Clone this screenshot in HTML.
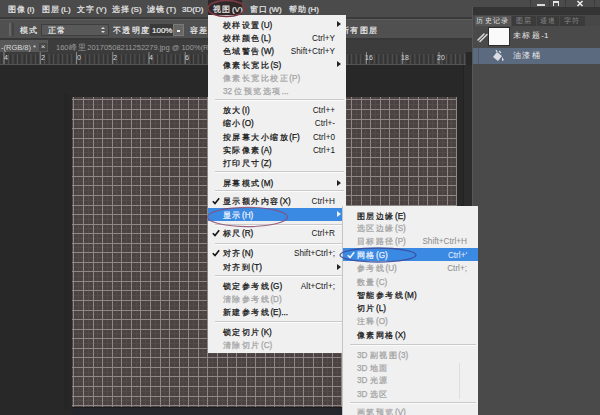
<!DOCTYPE html>
<html><head><meta charset="utf-8">
<style>
*{margin:0;padding:0;box-sizing:border-box}
html,body{width:600px;height:415px;overflow:hidden;background:#282828;font-family:"Liberation Sans",sans-serif;}
.a{position:absolute}
#menubar{left:0;top:0;width:600px;height:17px;background:#4b4b4b}
.mb{position:absolute;top:4px;font-size:8px;line-height:11px;color:#e8e8e8;white-space:nowrap;-webkit-text-stroke:0.2px currentColor}
#opts{left:0;top:19px;width:472px;height:19px;background:#505050;border-top:1px solid #5c5c5c}
.op{position:absolute;font-size:8px;line-height:11px;color:#ececec;white-space:nowrap;top:4.5px;-webkit-text-stroke:0.2px currentColor}
#tabs{left:0;top:40px;width:472px;height:12px;background:#3c3c3c}
#ruler{left:0;top:52px;width:466px;height:13px;background-color:#3b3b3b;border-bottom:1px solid #545454;
 background-image:
  linear-gradient(to right, #8a8a8a 0 1px, transparent 1px),
  linear-gradient(to right, #525252 0 1px, transparent 1px),
  linear-gradient(to right, #303030 0 1px, transparent 1px);
 background-size:36.25px 12px, 4.53px 10px, 4.53px 9px;
 background-position:3.5px 0, 3.5px 2px, 5.8px 3px;
 background-repeat:repeat-x, repeat-x, repeat-x}
.rn{position:absolute;top:2px;font-size:7px;line-height:8px;color:#d8d8d8}
#panel{left:472px;top:7px;width:128px;height:408px;background:#4a4a4a;border-left:1px solid #575757}
.ptab{position:absolute;top:8.5px;height:10px;font-size:7px;line-height:10px;color:#8c8c8c;white-space:nowrap;text-align:center}
.menu{position:absolute;background:#f0f0f0}
.mi{position:absolute;height:13px;font-size:8.2px;line-height:13px;color:#161616;white-space:nowrap}
.mi .t{position:absolute;top:0.6px;-webkit-text-stroke:0.25px currentColor}
.mi .k{position:absolute;top:0.6px}
.mi.d{color:#a4a4a4}
.mi.h{background:#3a89e2;color:#eaf2ff}
.mi.d .k{color:#8a8a8a}
.sep{position:absolute;height:2px;border-top:1px solid #cacaca;border-bottom:1px solid #fbfbfb}
.arr{position:absolute;right:5px;top:3px;width:0;height:0;border-left:4px solid #222;border-top:3.5px solid transparent;border-bottom:3.5px solid transparent}
.mi.h .arr{border-left-color:#eaf2ff}
.chk{position:absolute;left:4px;top:2.5px}
.c{letter-spacing:0.18em}
</style></head><body>

<div id="menubar" class="a">
 <span class="mb" style="left:8px"><span class="c">图像</span>(I)</span>
 <span class="mb" style="left:42px"><span class="c">图层</span>(L)</span>
 <span class="mb" style="left:77px"><span class="c">文字</span>(Y)</span>
 <span class="mb" style="left:112px"><span class="c">选择</span>(S)</span>
 <span class="mb" style="left:147px"><span class="c">滤镜</span>(T)</span>
 <span class="mb" style="left:182px">3D(D)</span>
 <div class="a" style="left:208px;top:0;width:34px;height:15px;background:#302729"></div>
 <span class="mb" style="left:213px"><span class="c">视图</span>(V)</span>
 <span class="mb" style="left:250px"><span class="c">窗口</span>(W)</span>
 <span class="mb" style="left:289px"><span class="c">帮助</span>(H)</span>
 <div class="a" style="left:530px;top:0;width:1px;height:7px;background:#3c3c3c"></div>
 <div class="a" style="left:549px;top:0;width:1px;height:7px;background:#3c3c3c"></div>
 <div class="a" style="left:565px;top:0;width:1px;height:7px;background:#3c3c3c"></div>
 <div class="a" style="left:594px;top:0;width:1px;height:7px;background:#3c3c3c"></div>
 <div class="a" style="left:537px;top:4px;width:8px;height:2px;background:#d8d8d8"></div>
 <div class="a" style="left:553px;top:1px;width:6px;height:5px;border:1px solid #e6e6e6;border-top-width:2px;border-bottom:none"></div>
 <svg class="a" style="left:576px;top:0" width="8" height="8" viewBox="0 0 8 8"><path d="M1.5 1 L6.5 6 M6.5 1 L1.5 6" stroke="#eee" stroke-width="1.5"/></svg>
</div>
<div class="a" style="left:0;top:17px;width:472px;height:2px;background:#3a3a3a"></div>

<div id="opts" class="a">
 <div class="a" style="left:9px;top:3px;width:2px;height:13px;background:#666"></div>
 <div class="a" style="left:12px;top:3px;width:2px;height:13px;background:#444"></div>
 <span class="op" style="left:20px"><span class="c">模式：</span></span>
 <div class="a" style="left:41px;top:4px;width:68px;height:12px;background:#595959;border:1px solid #3e3e3e"></div>
 <span class="op" style="left:48px"><span class="c">正常</span></span>
 <div class="a" style="left:101px;top:7px;width:0;height:0;border-left:2px solid transparent;border-right:2px solid transparent;border-bottom:2.5px solid #ddd"></div><div class="a" style="left:101px;top:11px;width:0;height:0;border-left:2px solid transparent;border-right:2px solid transparent;border-top:2.5px solid #ddd"></div>
 <span class="op" style="left:113px"><span class="c">不透明度：</span></span>
 <div class="a" style="left:150px;top:4px;width:23px;height:12px;background:#393939"></div>
 <span class="op" style="left:152px">100%</span>
 <div class="a" style="left:173px;top:4px;width:11px;height:12px;background:#666;border:1px solid #7a7a7a"></div>
 <div class="a" style="left:177px;top:10px;width:3px;height:2px;background:#eee"></div>
 <span class="op" style="left:190px"><span class="c">容差：</span></span>
 <span class="op" style="left:341px"><span class="c">所有图层</span></span>
</div>
<div class="a" style="left:0;top:38px;width:472px;height:2px;background:#383838"></div>

<div id="tabs" class="a">
 <div class="a" style="left:0;top:0;width:48px;height:12px;background:#585858"></div>
 <span class="a" style="left:1px;top:3px;font-size:7.5px;line-height:10px;color:#dadada;white-space:nowrap">-(RGB/8) *</span>
 <div class="a" style="left:39px;top:3px;width:8px;height:8px;background:#474747;color:#ddd;font-size:8px;line-height:8px;text-align:center">×</div>
 <span class="a" style="left:56px;top:3px;font-size:7.5px;line-height:10px;color:#9c9c9c;white-space:nowrap">160<span class="c">峰里</span>20170508211252279.jpg @ 100%(R</span>
</div>
<div id="ruler" class="a">
 <span class="rn" style="left:4px">4</span>
 <span class="rn" style="left:41px">2</span>
 <span class="rn" style="left:77px">0</span>
 <span class="rn" style="left:113px">2</span>
 <span class="rn" style="left:149px">4</span>
 <span class="rn" style="left:185px">6</span>
 <span class="rn" style="left:365px">16</span>
 <span class="rn" style="left:401px">18</span>
 <span class="rn" style="left:437px">20</span>
</div>

<div class="a" style="left:463px;top:65px;width:9px;height:350px;background:#2c2c2c;border-left:1px solid #222"></div>
<div class="a" style="left:64px;top:94px;width:400px;height:315px;background:linear-gradient(to right, rgba(20,24,20,.25), rgba(20,24,20,0) 9px)"></div>
<svg class="a" style="left:72px;top:97px" width="385" height="310" viewBox="0 0 385 310" shape-rendering="crispEdges"><rect width="385" height="310" fill="#4a4341"/><path d="M6.5 0V310M16.5 0V310M25.5 0V310M35.5 0V310M44.5 0V310M54.5 0V310M64.5 0V310M73.5 0V310M83.5 0V310M92.5 0V310M102.5 0V310M111.5 0V310M121.5 0V310M131.5 0V310M140.5 0V310M150.5 0V310M159.5 0V310M169.5 0V310M178.5 0V310M188.5 0V310M198.5 0V310M207.5 0V310M217.5 0V310M226.5 0V310M236.5 0V310M245.5 0V310M255.5 0V310M265.5 0V310M274.5 0V310M284.5 0V310M293.5 0V310M303.5 0V310M312.5 0V310M322.5 0V310M332.5 0V310M341.5 0V310M351.5 0V310M360.5 0V310M370.5 0V310M379.5 0V310M0 7.5H385M0 17.5H385M0 26.5H385M0 36.5H385M0 45.5H385M0 55.5H385M0 65.5H385M0 74.5H385M0 84.5H385M0 93.5H385M0 103.5H385M0 112.5H385M0 122.5H385M0 131.5H385M0 141.5H385M0 150.5H385M0 160.5H385M0 170.5H385M0 179.5H385M0 189.5H385M0 198.5H385M0 208.5H385M0 217.5H385M0 227.5H385M0 236.5H385M0 246.5H385M0 256.5H385M0 265.5H385M0 275.5H385M0 284.5H385M0 294.5H385M0 303.5H385" stroke="#534c4b" stroke-width="1" fill="none"/><path d="M1.5 0V310M11.5 0V310M21.5 0V310M30.5 0V310M40.5 0V310M49.5 0V310M59.5 0V310M68.5 0V310M78.5 0V310M88.5 0V310M97.5 0V310M107.5 0V310M116.5 0V310M126.5 0V310M135.5 0V310M145.5 0V310M155.5 0V310M164.5 0V310M174.5 0V310M183.5 0V310M193.5 0V310M202.5 0V310M212.5 0V310M222.5 0V310M231.5 0V310M241.5 0V310M250.5 0V310M260.5 0V310M269.5 0V310M279.5 0V310M289.5 0V310M298.5 0V310M308.5 0V310M317.5 0V310M327.5 0V310M336.5 0V310M346.5 0V310M355.5 0V310M365.5 0V310M375.5 0V310M384.5 0V310M0 2.5H385M0 12.5H385M0 22.5H385M0 31.5H385M0 41.5H385M0 50.5H385M0 60.5H385M0 69.5H385M0 79.5H385M0 88.5H385M0 98.5H385M0 108.5H385M0 117.5H385M0 127.5H385M0 136.5H385M0 146.5H385M0 155.5H385M0 165.5H385M0 174.5H385M0 184.5H385M0 193.5H385M0 203.5H385M0 213.5H385M0 222.5H385M0 232.5H385M0 241.5H385M0 251.5H385M0 260.5H385M0 270.5H385M0 279.5H385M0 289.5H385M0 299.5H385M0 308.5H385" stroke="#8f8686" stroke-width="1" fill="none"/></svg>
<div class="a" style="left:72px;top:407px;width:394px;height:8px;background:#25262b;border-top:1px solid #1c1c1e"></div>

<div id="panel" class="a">
 <div class="a" style="left:0;top:0;width:128px;height:8px;background:#343434"></div>
 <div class="a" style="left:0;top:8px;width:128px;height:11px;background:#474747"></div>
 <div class="ptab" style="left:2px;width:36px;background:#565656;color:#e4e4e4"><span class="c">历史记录</span></div>
 <div class="ptab" style="left:39px;width:24px;background:#3b3b3b"><span class="c">图层</span></div>
 <div class="ptab" style="left:64px;width:22px;background:#3b3b3b"><span class="c">通道</span></div>
 <div class="ptab" style="left:87px;width:25px;background:#3b3b3b"><span class="c">字符</span></div>
 <div class="a" style="left:15px;top:20px;width:22px;height:19px;background:#fafafa;border:1px solid #2c2c2c"></div>
 <span class="a" style="left:40px;top:23px;font-size:8px;line-height:12px;color:#e8e8e8;white-space:nowrap"><span class="c">未标题</span>-1</span>
 <div class="a" style="left:0;top:41px;width:128px;height:16px;background:#5b6a7e"></div>
 <div class="a" style="left:5px;top:41px;width:1px;height:16px;background:#4e5b6c"></div>
 <svg class="a" style="left:3px;top:23px" width="14" height="14" viewBox="0 0 14 14"><path d="M2 10 L8 4 M4 11.5 L11 4.5" stroke="#d4d4d4" stroke-width="1.6" fill="none" stroke-linecap="round"/></svg>
 <svg class="a" style="left:19px;top:42px" width="14" height="14" viewBox="0 0 14 14"><path d="M1 8 L5 3 L10 7 L6 12 Z" fill="#dcdde4"/><path d="M5 3 L4 1 M7 2 L9 4" stroke="#cdd" stroke-width="1.2"/><path d="M10 8 L12 11 L10 12 Z" fill="#e0e0e8"/></svg>
 <span class="a" style="left:40px;top:43px;font-size:8px;line-height:12px;color:#e8e8e8;white-space:nowrap"><span class="c">油漆桶</span></span>
</div>

<div class="menu" style="left:208px;top:15px;width:138px;height:338px"></div>
<div class="mi" style="left:208px;width:138px;top:18.4px"><span class="t" style="left:15px"><span class="c">校样设置</span>(U)</span><b class="arr"></b></div>
<div class="mi" style="left:208px;width:138px;top:31.9px"><span class="t" style="left:15px"><span class="c">校样颜色</span>(L)</span><span class="k" style="right:11px">Ctrl+Y</span></div>
<div class="mi" style="left:208px;width:138px;top:44.9px"><span class="t" style="left:15px"><span class="c">色域警告</span>(W)</span><span class="k" style="right:11px">Shift+Ctrl+Y</span></div>
<div class="mi" style="left:208px;width:138px;top:58.4px"><span class="t" style="left:15px"><span class="c">像素长宽比</span>(S)</span><b class="arr"></b></div>
<div class="mi d" style="left:208px;width:138px;top:71.5px"><span class="t" style="left:15px"><span class="c">像素长宽比校正</span>(P)</span></div>
<div class="mi d" style="left:208px;width:138px;top:84.2px"><span class="t" style="left:15px">32 <span class="c">位预览选项</span>...</span></div>
<div class="mi" style="left:208px;width:138px;top:103.5px"><span class="t" style="left:15px"><span class="c">放大</span>(I)</span><span class="k" style="right:11px">Ctrl++</span></div>
<div class="mi" style="left:208px;width:138px;top:116.9px"><span class="t" style="left:15px"><span class="c">缩小</span>(O)</span><span class="k" style="right:11px">Ctrl+-</span></div>
<div class="mi" style="left:208px;width:138px;top:130.1px"><span class="t" style="left:15px"><span class="c">按屏幕大小缩放</span>(F)</span><span class="k" style="right:11px">Ctrl+0</span></div>
<div class="mi" style="left:208px;width:138px;top:143.4px"><span class="t" style="left:15px"><span class="c">实际像素</span>(A)</span><span class="k" style="right:11px">Ctrl+1</span></div>
<div class="mi" style="left:208px;width:138px;top:156.9px"><span class="t" style="left:15px"><span class="c">打印尺寸</span>(Z)</span></div>
<div class="mi" style="left:208px;width:138px;top:176.5px"><span class="t" style="left:15px"><span class="c">屏幕模式</span>(M)</span><b class="arr"></b></div>
<div class="mi" style="left:208px;width:138px;top:194.9px"><svg class="chk" width="8" height="8" viewBox="0 0 8 8"><path d="M0.8 4.2 L3 6.6 L7.2 1.2" fill="none" stroke="currentColor" stroke-width="1.6"/></svg><span class="t" style="left:15px"><span class="c">显示额外内容</span>(X)</span><span class="k" style="right:11px">Ctrl+H</span></div>
<div class="mi h" style="left:208px;width:138px;top:208.3px"><span class="t" style="left:15px"><span class="c">显示</span>(H)</span><b class="arr"></b></div>
<div class="mi" style="left:208px;width:138px;top:226.9px"><svg class="chk" width="8" height="8" viewBox="0 0 8 8"><path d="M0.8 4.2 L3 6.6 L7.2 1.2" fill="none" stroke="currentColor" stroke-width="1.6"/></svg><span class="t" style="left:15px"><span class="c">标尺</span>(R)</span><span class="k" style="right:11px">Ctrl+R</span></div>
<div class="mi" style="left:208px;width:138px;top:246.5px"><svg class="chk" width="8" height="8" viewBox="0 0 8 8"><path d="M0.8 4.2 L3 6.6 L7.2 1.2" fill="none" stroke="currentColor" stroke-width="1.6"/></svg><span class="t" style="left:15px"><span class="c">对齐</span>(N)</span><span class="k" style="right:11px">Shift+Ctrl+;</span></div>
<div class="mi" style="left:208px;width:138px;top:260.5px"><span class="t" style="left:15px"><span class="c">对齐到</span>(T)</span><b class="arr"></b></div>
<div class="mi" style="left:208px;width:138px;top:279.1px"><span class="t" style="left:15px"><span class="c">锁定参考线</span>(G)</span><span class="k" style="right:11px">Alt+Ctrl+;</span></div>
<div class="mi d" style="left:208px;width:138px;top:292.3px"><span class="t" style="left:15px"><span class="c">清除参考线</span>(D)</span></div>
<div class="mi" style="left:208px;width:138px;top:305.8px"><span class="t" style="left:15px"><span class="c">新建参考线</span>(E)...</span></div>
<div class="mi" style="left:208px;width:138px;top:325.3px"><span class="t" style="left:15px"><span class="c">锁定切片</span>(K)</span></div>
<div class="mi d" style="left:208px;width:138px;top:338.3px"><span class="t" style="left:15px"><span class="c">清除切片</span>(C)</span></div>
<div class="sep" style="left:215px;width:129px;top:99.1px"></div>
<div class="sep" style="left:215px;width:129px;top:170.9px"></div>
<div class="sep" style="left:215px;width:129px;top:189.5px"></div>
<div class="sep" style="left:215px;width:129px;top:224.0px"></div>
<div class="sep" style="left:215px;width:129px;top:243.0px"></div>
<div class="sep" style="left:215px;width:129px;top:275.0px"></div>
<div class="sep" style="left:215px;width:129px;top:321.1px"></div>

<div class="menu" style="left:342px;top:206px;width:136px;height:209px;border-left:1px solid #c4c4c4"></div>
<div class="a" style="left:459px;top:363px;width:1px;height:36px;background:#dedede"></div>
<div class="mi" style="left:343px;width:135px;top:209.2px"><span class="t" style="left:14px"><span class="c">图层边缘</span>(E)</span></div>
<div class="mi d" style="left:343px;width:135px;top:221.9px"><span class="t" style="left:14px"><span class="c">选区边缘</span>(S)</span></div>
<div class="mi d" style="left:343px;width:135px;top:234.9px"><span class="t" style="left:14px"><span class="c">目标路径</span>(P)</span><span class="k" style="right:11px">Shift+Ctrl+H</span></div>
<div class="mi h" style="left:343px;width:135px;top:248.1px"><svg class="chk" width="8" height="8" viewBox="0 0 8 8"><path d="M0.8 4.2 L3 6.6 L7.2 1.2" fill="none" stroke="currentColor" stroke-width="1.6"/></svg><span class="t" style="left:14px"><span class="c">网格</span>(G)</span><span class="k" style="right:11px">Ctrl+'</span></div>
<div class="mi d" style="left:343px;width:135px;top:261.8px"><span class="t" style="left:14px"><span class="c">参考线</span>(U)</span><span class="k" style="right:11px">Ctrl+;</span></div>
<div class="mi d" style="left:343px;width:135px;top:275.1px"><span class="t" style="left:14px"><span class="c">数量</span>(C)</span></div>
<div class="mi" style="left:343px;width:135px;top:288.1px"><span class="t" style="left:14px"><span class="c">智能参考线</span>(M)</span></div>
<div class="mi" style="left:343px;width:135px;top:301.5px"><span class="t" style="left:14px"><span class="c">切片</span>(L)</span></div>
<div class="mi d" style="left:343px;width:135px;top:314.7px"><span class="t" style="left:14px"><span class="c">注释</span>(O)</span></div>
<div class="mi" style="left:343px;width:135px;top:328.3px"><span class="t" style="left:14px"><span class="c">像素网格</span>(X)</span></div>
<div class="mi d" style="left:343px;width:135px;top:348.2px"><span class="t" style="left:14px">3D <span class="c">副视图</span>(3)</span></div>
<div class="mi d" style="left:343px;width:135px;top:361.1px"><span class="t" style="left:14px">3D <span class="c">地面</span></span></div>
<div class="mi d" style="left:343px;width:135px;top:373.9px"><span class="t" style="left:14px">3D <span class="c">光源</span></span></div>
<div class="mi d" style="left:343px;width:135px;top:387.3px"><span class="t" style="left:14px">3D <span class="c">选区</span></span></div>
<div class="mi d" style="left:343px;width:135px;top:405.3px"><span class="t" style="left:14px"><span class="c">画笔预览</span>(V)</span></div>
<div class="sep" style="left:350px;width:126px;top:343.7px"></div>
<div class="sep" style="left:350px;width:126px;top:402.3px"></div>

<svg class="a" style="left:0;top:0" width="600" height="415" viewBox="0 0 600 415">
 <ellipse cx="226.5" cy="8.5" rx="18.5" ry="8" fill="none" stroke="#7a3a44" stroke-width="1.6"/>
 <ellipse cx="247.5" cy="217" rx="40" ry="9.6" fill="none" stroke="#8a4a70" stroke-width="1.2" opacity="0.85"/>
 <ellipse cx="378" cy="255" rx="38" ry="7" fill="none" stroke="#3a4c9a" stroke-width="1.3" opacity="0.9"/>
</svg>
</body></html>
